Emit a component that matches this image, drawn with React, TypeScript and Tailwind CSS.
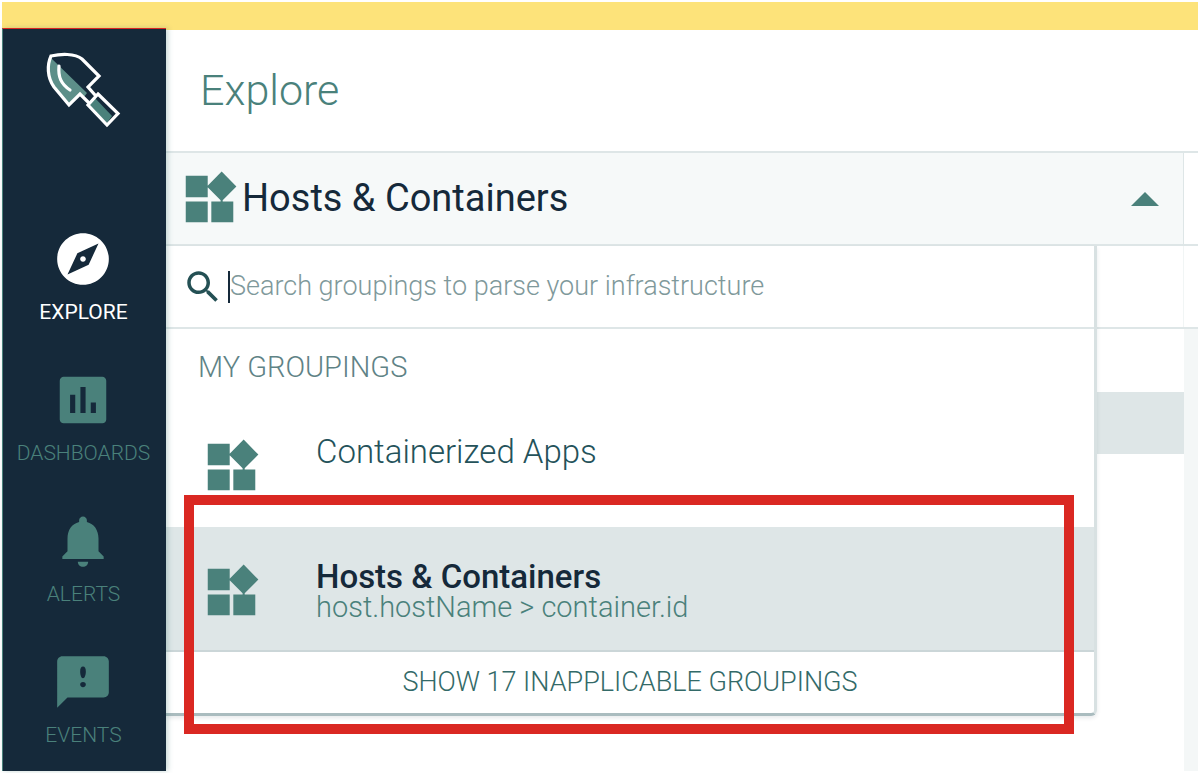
import React from "react";

type NavItem = { label: string; icon: React.ReactNode; active?: boolean };

type Grouping = { title: string; path?: string; selected?: boolean };

function Trowel() {
  return (
    <svg viewBox="44 50 80 80" className="h-20 w-20" fill="none" aria-hidden="true">
      <path d="M51 59 L87 94 L84 98 L80 95 L69 106 L54 88 C47 79 48 68 51 59Z" fill="#5d8f89" />
      <path d="M91 103 L95 99 L112 117 L107 124 L89 106Z" fill="#4a817b" />
      <g stroke="#fff" strokeWidth="3.2" strokeLinejoin="miter" strokeLinecap="round">
        <path d="M95 96 L88 88 L99 77 L82 60 C75 54 60 55 51 57 C47 66 47 78 54 88 L69 106 L80 95 L88 103" />
        <path d="M98 95 L118 114.500 L107 126 L88 106Z" />
        <path d="M59 67 C58 78 61 85 70 91" />
      </g>
    </svg>
  );
}

function WidgetsIcon() {
  return (
    <svg viewBox="0 0 24 24" className="size-[62px] shrink-0 fill-[#4a817b]" aria-hidden="true">
      <path d="M12.900 13v8h8.500v-8h-8.500zM3 21h8.500v-8H3v8zM3 3v8.300h8.500V3H3zm13.900-1.600L11.200 7.200l5.300 5.300v.7h.8v-.7l5.300-5.300-5.700-5.800z" />
    </svg>
  );
}

function NavIcon({ children }: { children: React.ReactNode }) {
  return (
    <svg viewBox="0 0 24 24" className="size-[62px]" fill="currentColor" fillRule="evenodd" aria-hidden="true">
      {children}
    </svg>
  );
}

const navItems: NavItem[] = [
  {
    label: "EXPLORE",
    active: true,
    icon: (
      <path d="M12 10.900c-.61 0-1.100.49-1.100 1.100s.49 1.100 1.100 1.100c.61 0 1.100-.49 1.100-1.100s-.49-1.100-1.100-1.100zM12 2C6.480 2 2 6.480 2 12s4.480 10 10 10 10-4.480 10-10S17.520 2 12 2zm2.190 12.190L6 18l3.810-8.190L18 6l-3.810 8.190z" />
    ),
  },
  {
    label: "DASHBOARDS",
    icon: (
      <path d="M19.500 3h-15C3.700 3 3 3.700 3 4.500v15c0 .8.700 1.500 1.500 1.500h15c.8 0 1.500-.7 1.500-1.500v-15c0-.8-.7-1.500-1.500-1.500zM9 17H7v-7h2v7zm4 0h-2V7h2v10zm4 0h-2v-4h2v4z" />
    ),
  },
  {
    label: "ALERTS",
    icon: (
      <path d="M12 22c1.100 0 2-.9 2-2h-4c0 1.100.89 2 2 2zm6-6v-5c0-3.070-1.640-5.640-4.500-6.320V4c0-.83-.67-1.500-1.500-1.500s-1.500.67-1.500 1.500v.68C7.630 5.360 6 7.920 6 11v5l-2 2v1h16v-1l-2-2z" />
    ),
  },
  {
    label: "EVENTS",
    icon: (
      <path d="M20 2H4c-1.100 0-2 .9-2 2v18l4-4h14c1.100 0 2-.9 2-2V4c0-1.100-.9-2-2-2zM12 6c.7 0 1.100.6 1.100 1.900S12.700 10.500 12 10.500s-1.100-1.300-1.100-2.600S11.300 6 12 6zM12 12c.7 0 1.100.4 1.100 1s-.4 1-1.100 1-1.100-.4-1.100-1 .4-1 1.100-1z" />
    ),
  },
];

const groupings: Grouping[] = [
  { title: "Containerized Apps" },
  { title: "Hosts & Containers", path: "host.hostName > container.id", selected: true },
];

function Sidebar() {
  return (
    <nav className="z-10 flex w-[164px] shrink-0 flex-col items-center border-t border-l border-t-[#da2822] border-l-[#4a817b] bg-[#15293a] pt-5 pr-0.5 shadow-[2px_0_5px_rgba(74,129,123,0.3)]">
      <Trowel />
      <ul className="mt-[99px] flex flex-col gap-[47px]">
        {navItems.map((item) => (
          <li key={item.label}>
            <a
              href="#"
              className={
                item.active
                  ? "flex flex-col items-center gap-3 text-[21px] leading-5 text-white"
                  : "flex flex-col items-center gap-3 text-[21px] leading-5 font-light text-[#4a817b]"
              }
            >
              <NavIcon>{item.icon}</NavIcon>
              {item.label}
            </a>
          </li>
        ))}
      </ul>
    </nav>
  );
}

function GroupingMenu() {
  return (
    <div className="absolute top-full right-[101px] left-0 mt-0.5 rounded-br-md border-r-3 border-b-3 border-r-[#d8e1e2] border-b-[#aabcbf] bg-white shadow-[0_2px_4px_rgba(21,41,58,0.1)]">
      <label className="flex h-[83px] items-center border-b-2 border-[#dee6e7] pl-4">
        <svg viewBox="0 0 24 24" className="size-[42px] fill-[#245054]" aria-hidden="true">
          <path d="M15.500 14h-.79l-.28-.27C15.410 12.590 16 11.110 16 9.500 16 5.910 13.090 3 9.500 3S3 5.910 3 9.500 5.910 16 9.500 16c1.610 0 3.090-.59 4.230-1.570l.27.280v.79l5 4.990L20.490 19l-4.990-5zm-6 0C7.010 14 5 11.990 5 9.500S7.010 5 9.500 5 14 7.010 14 9.500 11.990 14 9.500 14z" />
        </svg>
        <span className="ml-1 h-8 w-0.5 bg-[#15293a]" />
        <input
          type="text"
          aria-label="Search groupings"
          placeholder="Search groupings to parse your infrastructure"
          className="h-10 min-w-0 flex-1 text-[27px] font-light text-[#15293a] outline-none placeholder:text-[#7f999b]"
        />
      </label>
      <h2 className="flex h-[73px] items-center pt-1 pl-8 text-[29px] font-light text-[#5f8386]">MY GROUPINGS</h2>
      <div className="relative">
        <ul>
          {groupings.map((g) => (
            <li key={g.title}>
              <button
                type="button"
                className={
                  g.selected
                    ? "flex h-[125px] w-full items-start border-b-2 border-[#cbd6d8] bg-[#dee6e7] pl-[34px] text-left"
                    : "flex h-[125px] w-full items-start pl-[34px] text-left"
                }
              >
                <span className="mt-[34px]">
                  <WidgetsIcon />
                </span>
                <span className="mt-[34px] ml-[54px] flex flex-col">
                  <span
                    className={
                      g.selected
                        ? "text-[33px] leading-8 font-medium text-[#15293a]"
                        : "text-[33px] leading-8 font-light text-[#24525a]"
                    }
                  >
                    {g.title}
                  </span>
                  {g.path && <span className="text-[29px] leading-7 font-light text-[#4a817b]">{g.path}</span>}
                </span>
              </button>
            </li>
          ))}
        </ul>
        <button type="button" className="h-[61px] w-full text-[27px] font-light text-[#336a68]">
          SHOW 17 INAPPLICABLE GROUPINGS
        </button>
        <div className="pointer-events-none absolute top-[93px] right-5 -bottom-[21px] left-[18px] border-10 border-[#da2822]" />
      </div>
    </div>
  );
}

export default function App() {
  return (
    <div className="flex min-h-screen flex-col bg-white p-0.5 font-['Roboto',sans-serif] text-[#15293a]">
      <div className="h-[26px] bg-[#fde37a]" />
      <div className="flex flex-1">
        <Sidebar />
        <main className="flex min-w-0 flex-1 flex-col border-t-2 border-[#fde37a]">
          <header className="flex h-[121px] items-center pl-[34px]">
            <h1 className="text-[43px] font-light text-[#4a817b]">Explore</h1>
          </header>
          <div className="relative border-y-2 border-[#dee6e7]">
            <button
              type="button"
              className="flex h-[91px] w-[calc(100%-14px)] items-center border-r border-[#dee6e7] bg-[#f6f9f9] pl-3 text-[38px]"
            >
              <WidgetsIcon />
              <span className="ml-0.5">Hosts &amp; Containers</span>
              <svg viewBox="0 0 28 14" className="mr-6 ml-auto h-3.5 w-7 fill-[#4a817b]" aria-hidden="true">
                <path d="M0 14 14 0l14 14z" />
              </svg>
            </button>
            <GroupingMenu />
          </div>
          <div className="h-[83px] border-b-2 border-[#dee6e7]">
            <div className="mr-3.5 h-full border-r border-[#f1f5f5]" />
          </div>
          <div className="flex flex-1">
            <div className="flex-1 pt-[63px]">
              <div className="h-[62px] bg-[#dee6e7]" />
            </div>
            <div className="w-3.5 bg-[#f4f7f7]" />
          </div>
        </main>
      </div>
    </div>
  );
}
